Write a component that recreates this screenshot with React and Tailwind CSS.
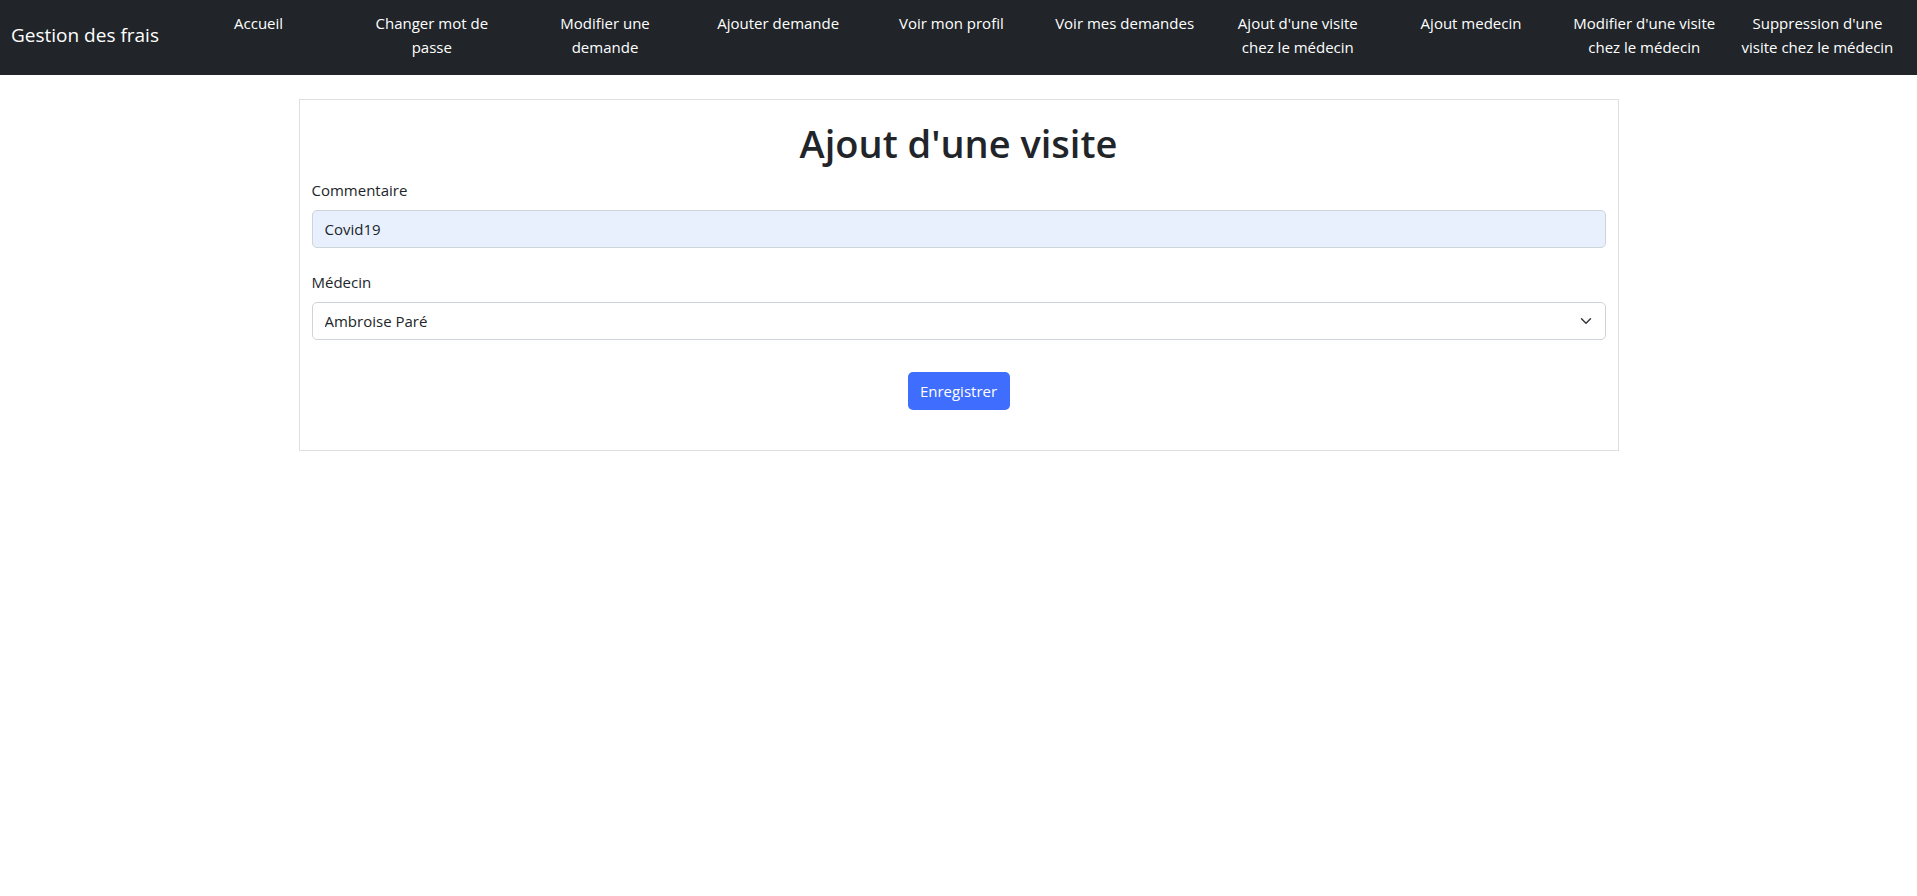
import React from 'react';

const links = [
  ['Accueil'],
  ['Changer mot de', 'passe'],
  ['Modifier une', 'demande'],
  ['Ajouter demande'],
  ['Voir mon profil'],
  ['Voir mes demandes'],
  ["Ajout d'une visite", 'chez le médecin'],
  ['Ajout medecin'],
  ["Modifier d'une visite", 'chez le médecin'],
  ["Suppression d'une", 'visite chez le médecin'],
];

const Navbar = () => (
  <nav className="flex h-[75px] bg-[#212529] text-white">
    <a href="#" className="w-[172px] shrink-0 pl-[11px] pt-[20px] text-[19px] leading-[30px] whitespace-nowrap">
      Gestion des frais
    </a>
    <ul className="flex flex-1 pr-[13px] pt-[11px]">
      {links.map((lines, i) => (
        <li key={i} className="flex-1 text-center text-[15px] leading-[24px] whitespace-nowrap">
          <a href="#">
            {lines.map((l, j) => (
              <span key={j} className="block">{l}</span>
            ))}
          </a>
        </li>
      ))}
    </ul>
  </nav>
);

const App = () => {
  return (
    <div className="min-h-screen bg-white font-['Open_Sans',sans-serif] text-[#212529]">
      <Navbar />
      <main className="mx-auto mt-6 w-[1320px]">
        <div className="border border-[#dfdfdf] px-[12px] pt-[19px] pb-[40px]">
          <h1 className="mb-[11px] text-center text-[38px] font-semibold leading-[48px]">Ajout d'une visite</h1>
          <form onSubmit={(e) => e.preventDefault()}>
            <label className="mb-2 block text-[15px] leading-6">Commentaire</label>
            <input
              defaultValue="Covid19"
              className="mb-[22px] block h-[38px] w-full rounded-[5px] border border-[#ced4da] bg-[#e8f0fe] px-3 text-[15px] text-[#212529] outline-none"
            />
            <label className="mb-2 block text-[15px] leading-6">Médecin</label>
            <div className="relative">
              <select
                defaultValue="pare"
                className="block h-[38px] w-full appearance-none rounded-[5px] border border-[#ced4da] bg-white pl-3 pr-9 text-[15px] text-[#212529] outline-none"
              >
                <option value="pare">Ambroise Paré</option>
              </select>
              <svg
                className="pointer-events-none absolute right-3 top-[13px]"
                width="16"
                height="12"
                viewBox="0 0 16 16"
                fill="none"
                stroke="#343a40"
                strokeWidth="2"
                strokeLinecap="round"
                strokeLinejoin="round"
              >
                <path d="M2 5l6 6 6-6" />
              </svg>
            </div>
            <div className="mt-[32px] flex justify-center">
              <button
                type="submit"
                className="h-[38px] w-[102px] rounded-[5px] bg-[#3f6dfd] text-[15px] text-white"
              >
                Enregistrer
              </button>
            </div>
          </form>
        </div>
      </main>
    </div>
  );
};

export default App;
